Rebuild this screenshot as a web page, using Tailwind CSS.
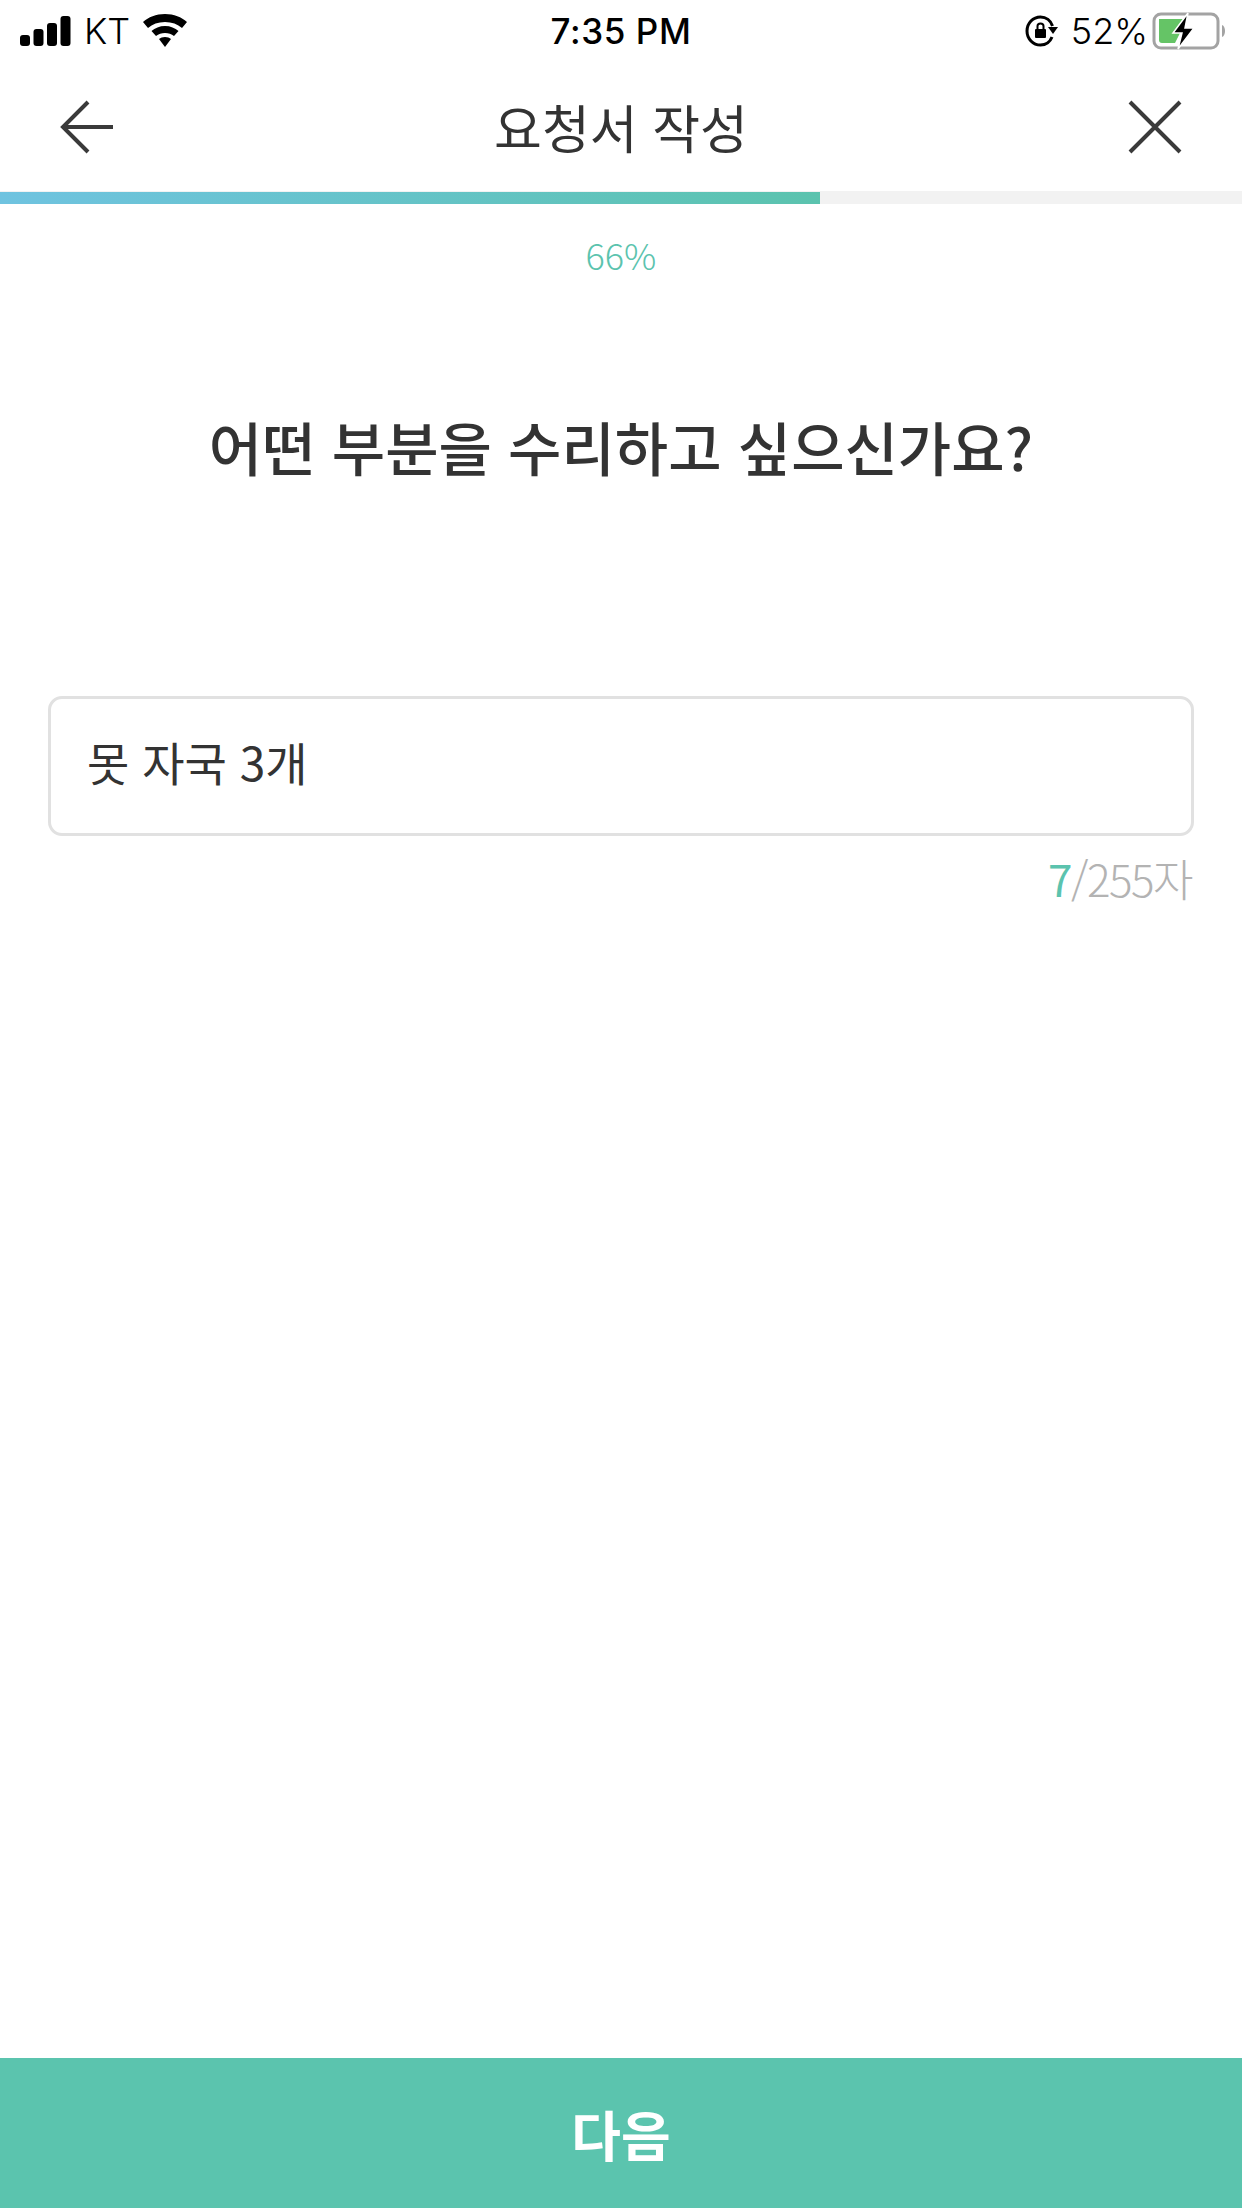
<!DOCTYPE html>
<html lang="ko">
<head>
    <meta charset="UTF-8">
    <meta name="viewport" content="width=device-width, initial-scale=1.0">
    <title>요청서 작성</title>
    <script src="https://cdn.jsdelivr.net/npm/@tailwindcss/browser@4"></script>
</head>
<body class="bg-white">
    <div class="w-[1242px] h-[2208px] flex flex-col font-['Noto_Sans_CJK_KR',sans-serif] text-[#333333]">
        <!-- Status bar -->
        <div class="h-[62px] shrink-0 grid grid-cols-[1fr_auto_1fr] items-center text-black font-['Inter']">
            <div class="flex items-center pl-[19px]">
                <svg width="54" height="30" viewBox="0 0 54 30" fill="currentColor">
                    <rect x="1" y="19" width="10" height="11" rx="3"/>
                    <rect x="14.500" y="13" width="10" height="17" rx="3"/>
                    <rect x="28" y="7" width="10" height="23" rx="3"/>
                    <rect x="41.500" y="0" width="10" height="30" rx="3"/>
                </svg>
                <span class="ml-[11px] text-[36px] leading-none font-light">KT</span>
                <svg class="ml-[12px]" width="46" height="34" viewBox="0 0 46 34" fill="currentColor">
                    <path d="M23 0C14 0 6.500 3 1 8L6 14C10.500 10 16 8 23 8C30 8 35.500 10 40 14L45 8C39.500 3 32 0 23 0Z"/>
                    <path d="M23 12C17.500 12 13 14 9.500 17L14 22C16.500 20 19.500 19 23 19C26.500 19 29.500 20 32 22L36.500 17C33 14 28.500 12 23 12Z"/>
                    <path d="M23 23C20.500 23 18.500 23.800 17 25L23 33L29 25C27.500 23.800 25.500 23 23 23Z"/>
                </svg>
            </div>
            <div class="text-center text-[35px] leading-none font-medium tracking-[0.6px]">7:35 PM</div>
            <div class="flex items-center justify-end pr-[14px]">
                <svg width="33" height="34" viewBox="0 0 33 34" fill="none">
                    <path d="M27 23C25 28 20.500 31 15.500 31C8 31 2 24.800 2 17C2 9.200 8 3 15.500 3C21 3 25.800 6.500 27.500 12" stroke="currentColor" stroke-width="3"/>
                    <path d="M23 13H33L28 20Z" fill="currentColor"/>
                    <rect x="10" y="15" width="11" height="9" rx="1" fill="currentColor"/>
                    <path d="M12.500 15V12C12.500 8.500 18.500 8.500 18.500 12V15" stroke="currentColor" stroke-width="2"/>
                </svg>
                <span class="ml-[13px] text-[36px] leading-none font-light">52%</span>
                <svg class="ml-[4px]" width="76" height="38" viewBox="0 0 76 38" fill="none">
                    <rect x="2" y="2" width="64" height="34" rx="7" stroke="#a3a3a3" stroke-width="3"/>
                    <path d="M7 7H31L21 21H28L23 31H10Q7 31 7 28Z" fill="#65c466"/>
                    <path d="M36 1L21 21H30L26 37L42 16H33Z" fill="#000" stroke="#fff" stroke-width="1.500"/>
                    <path d="M70 13C74 14 74 24 70 25Z" fill="#a3a3a3"/>
                </svg>
            </div>
        </div>

        <!-- Header -->
        <div class="h-[129px] shrink-0 flex items-center justify-between px-[60px]">
            <svg width="54" height="54" viewBox="0 0 54 54" fill="none" stroke="#3a3a3a" stroke-width="4">
                <path d="M28 2L3 27L28 52M3 27H53"/>
            </svg>
            <h1 class="text-[52px] leading-none font-normal">요청서 작성</h1>
            <svg width="54" height="54" viewBox="0 0 54 54" fill="none" stroke="#3a3a3a" stroke-width="4">
                <path d="M2 2L52 52M52 2L2 52"/>
            </svg>
        </div>

        <!-- Progress -->
        <div class="h-[13px] shrink-0 bg-[#f2f2f2] pt-px">
            <div class="h-full w-[820px] bg-gradient-to-r from-[#6fc3e0] to-[#5bc3ae]"></div>
        </div>
        <div class="mt-[26px] text-center text-[36px] leading-[48px] text-[#5bc3ae] font-light">66%</div>

        <h2 class="mt-[128px] text-center text-[58px] leading-[80px] font-medium">어떤 부분을 수리하고 싶으신가요?</h2>

        <!-- Input -->
        <div class="mt-[210px] mx-[48px] h-[140px] border-[3px] border-[#e1e1e1] rounded-[14px] flex items-center pl-[36px] pb-[10px] text-[46px]">못 자국 3개</div>
        <div class="mt-[15px] pr-[50px] text-right text-[44px] leading-[54px] text-[#b3b3b3] font-light tracking-[-1.5px]"><span class="text-[#5bc3ae] font-normal">7</span>/255자</div>

        <!-- Next button -->
        <button class="mt-auto h-[150px] shrink-0 bg-[#5bc4ae] text-white text-[54px] font-bold">다음</button>
    </div>
</body>
</html>
